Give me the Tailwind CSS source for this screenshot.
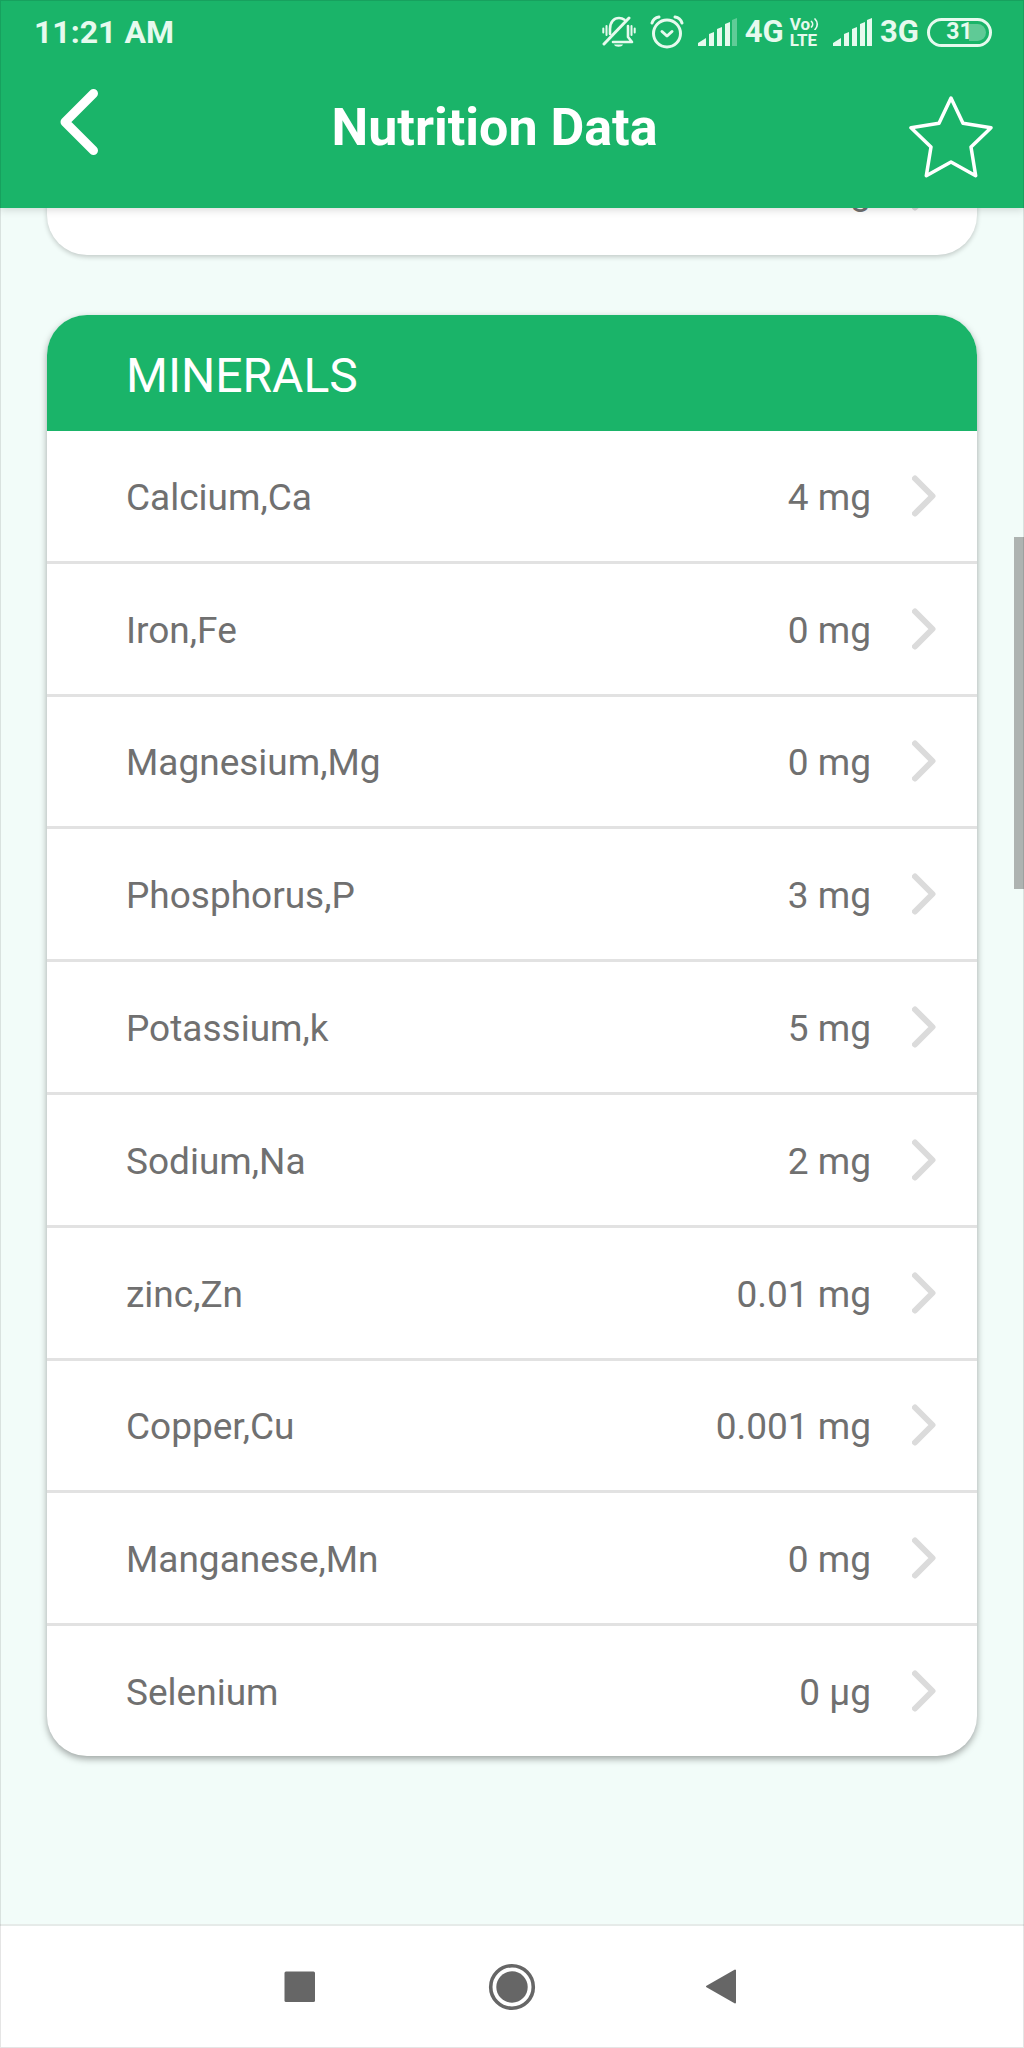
<!DOCTYPE html>
<html lang="en">
<head>
    <meta charset="UTF-8">
    <meta name="viewport" content="width=device-width, initial-scale=1.0">
    <title>Nutrition Data</title>
    <script src="https://cdn.jsdelivr.net/npm/@tailwindcss/browser@4"></script>
</head>
<body class="bg-[#f2fcf9] font-['Roboto',sans-serif]">
    <svg class="hidden">
        <symbol id="chevron" viewBox="0 0 24 42">
            <path d="M3 3.500 20.500 21 3 38.500" fill="none" stroke="#dbdbdb" stroke-width="6" stroke-linecap="round" stroke-linejoin="round"/>
        </symbol>
    </svg>

    <div class="relative flex min-h-screen flex-col overflow-hidden after:pointer-events-none after:absolute after:inset-0 after:z-20 after:border after:border-black/10">
        <header class="z-10 bg-[#1ab469] pb-6 text-white shadow-[0_2px_8px_rgba(0,0,0,0.15)]">
            <!-- status bar -->
            <div class="flex h-16 items-center justify-between pr-8 pl-8 text-[#e6faee]">
                <span class="pl-[2px] text-[32px] leading-8 font-bold">11:21 AM</span>
                <div class="flex items-center">
                    <!-- muted bell -->
                    <svg class="mr-[14px] h-[34px] w-[34px]" viewBox="0 0 34 34" fill="none" stroke="currentColor" stroke-width="2.6" stroke-linecap="round" stroke-linejoin="round">
                        <path d="M8 19V14C8 7 12 3 17 3c2 0 4 .6 5.500 1.800"/>
                        <path d="M26 11v11l4 5H11"/>
                        <path d="M2 29 27 3" stroke-width="3"/>
                        <path d="M4.500 11v9M1.300 13.500v4M29.500 11v9M32.700 13.500v4" stroke-width="2"/>
                        <path d="M12 29.500h9c-1 3-8 3-9 0z" fill="currentColor" stroke="none"/>
                    </svg>
                    <!-- alarm -->
                    <svg class="mr-[14px] h-[34px] w-[34px]" viewBox="0 0 34 34" fill="none" stroke="currentColor" stroke-width="3" stroke-linecap="round" stroke-linejoin="round">
                        <circle cx="17" cy="18.500" r="13.500"/>
                        <path d="M12 16.500 17 21l5-4.500"/>
                        <path d="M2 8C3 5 6 2.500 9 2M32 8c-1-3-4-5.500-7-6" stroke-width="3"/>
                    </svg>
                    <svg class="mr-2 h-7 w-[39px]" viewBox="0 0 39 28" fill="currentColor">
                        <path d="M0 28v-3l8-5v8zM11 16l5-2v14h-5zM19 11l5-2v19h-5zM27 6l5-2v24h-5z"/>
                        <path d="M34 2l5-2v28h-5z" opacity=".35"/>
                    </svg>
                    <span class="text-[31px] leading-8 font-bold">4G</span>
                    <span class="mr-[14px] ml-[6px] flex flex-col text-[17px] leading-4 font-bold">
                        <span class="flex items-center">Vo<svg class="h-3 w-[9px]" viewBox="0 0 9 12" fill="none" stroke="currentColor" stroke-width="1.700" stroke-linecap="round"><path d="M1.500 3.500c1.500 1.500 1.500 4 0 5.500M5 1c3 3 3 7.500 0 10.500"/></svg></span>
                        <span>LTE</span>
                    </span>
                    <svg class="mr-2 h-7 w-[39px]" viewBox="0 0 39 28" fill="currentColor">
                        <path d="M0 28v-3l8-5v8zM11 16l5-2v14h-5zM19 11l5-2v19h-5zM27 6l5-2v24h-5zM34 2l5-2v28h-5z"/>
                    </svg>
                    <span class="text-[31px] leading-8 font-bold">3G</span>
                    <span class="relative ml-2 flex h-[29px] w-[65px] items-center justify-center rounded-full border-3 border-current text-[23px] leading-6 font-bold">
                        <span class="absolute inset-y-[3px] right-[3px] w-[17px] rounded-r-full bg-white/30"></span>
                        <span class="relative">31</span>
                    </span>
                </div>
            </div>
            <!-- title bar -->
            <div class="flex h-[120px] items-start justify-between pr-[31px] pl-[60px]">
                <button type="button" aria-label="Back" class="mt-6">
                    <svg class="h-[68px] w-10" viewBox="0 0 40 68" fill="none" stroke="currentColor" stroke-width="9" stroke-linecap="round" stroke-linejoin="round">
                        <path d="M33.500 5.500 5 34l28.500 28.500"/>
                    </svg>
                </button>
                <h1 class="mt-[34px] mr-5 text-[52px] leading-[60px] font-bold">Nutrition Data</h1>
                <button type="button" aria-label="Add to favourites" class="mt-[31px]">
                    <svg class="h-[84px] w-[84px]" viewBox="0 0 84 84" fill="none" stroke="currentColor" stroke-width="3.500" stroke-linejoin="round">
                        <path d="M42 3 54 28.300 82 32.700 62 52 66.700 80.700 42 67 17.300 80.700 22 52 2 32.700 30 28.300z"/>
                    </svg>
                </button>
            </div>
        </header>

        <main class="flex-1 px-[47px]">
            <!-- tail of the previous group, scrolled under the header -->
            <section class="-mt-[83px] rounded-b-[40px] bg-white shadow-[0_2px_5px_rgba(0,0,0,0.2)]">
                <a href="#" class="flex h-[130px] items-center justify-end pr-[41px] text-[37px] leading-[44px] text-[#707070]">
                    <span class="mr-[41px] pt-1">0 mg</span>
                    <svg class="h-[42px] w-6"><use href="#chevron"/></svg>
                </a>
            </section>

            <section class="mt-[60px] overflow-hidden rounded-[40px] bg-white shadow-[0_3px_7px_rgba(0,0,0,0.35)]">
                <h2 class="bg-[#1ab469] px-[79px] pt-[33px] pb-[27px] text-[48px] leading-[56px] text-white">MINERALS</h2>
                <ul class="flex h-[1325px] flex-col divide-y-3 divide-[#e2e2e2] text-[37px] leading-[44px] text-[#707070]">
                    <li class="flex flex-1"><a href="#" class="flex flex-1 items-center pr-[41px] pl-[79px]">
                        <span class="flex-1 pt-1">Calcium,Ca</span><span class="mr-[41px] pt-1">4 mg</span>
                        <svg class="h-[42px] w-6"><use href="#chevron"/></svg>
                    </a></li>
                    <li class="flex flex-1"><a href="#" class="flex flex-1 items-center pr-[41px] pl-[79px]">
                        <span class="flex-1 pt-1">Iron,Fe</span><span class="mr-[41px] pt-1">0 mg</span>
                        <svg class="h-[42px] w-6"><use href="#chevron"/></svg>
                    </a></li>
                    <li class="flex flex-1"><a href="#" class="flex flex-1 items-center pr-[41px] pl-[79px]">
                        <span class="flex-1 pt-1">Magnesium,Mg</span><span class="mr-[41px] pt-1">0 mg</span>
                        <svg class="h-[42px] w-6"><use href="#chevron"/></svg>
                    </a></li>
                    <li class="flex flex-1"><a href="#" class="flex flex-1 items-center pr-[41px] pl-[79px]">
                        <span class="flex-1 pt-1">Phosphorus,P</span><span class="mr-[41px] pt-1">3 mg</span>
                        <svg class="h-[42px] w-6"><use href="#chevron"/></svg>
                    </a></li>
                    <li class="flex flex-1"><a href="#" class="flex flex-1 items-center pr-[41px] pl-[79px]">
                        <span class="flex-1 pt-1">Potassium,k</span><span class="mr-[41px] pt-1">5 mg</span>
                        <svg class="h-[42px] w-6"><use href="#chevron"/></svg>
                    </a></li>
                    <li class="flex flex-1"><a href="#" class="flex flex-1 items-center pr-[41px] pl-[79px]">
                        <span class="flex-1 pt-1">Sodium,Na</span><span class="mr-[41px] pt-1">2 mg</span>
                        <svg class="h-[42px] w-6"><use href="#chevron"/></svg>
                    </a></li>
                    <li class="flex flex-1"><a href="#" class="flex flex-1 items-center pr-[41px] pl-[79px]">
                        <span class="flex-1 pt-1">zinc,Zn</span><span class="mr-[41px] pt-1">0.01 mg</span>
                        <svg class="h-[42px] w-6"><use href="#chevron"/></svg>
                    </a></li>
                    <li class="flex flex-1"><a href="#" class="flex flex-1 items-center pr-[41px] pl-[79px]">
                        <span class="flex-1 pt-1">Copper,Cu</span><span class="mr-[41px] pt-1">0.001 mg</span>
                        <svg class="h-[42px] w-6"><use href="#chevron"/></svg>
                    </a></li>
                    <li class="flex flex-1"><a href="#" class="flex flex-1 items-center pr-[41px] pl-[79px]">
                        <span class="flex-1 pt-1">Manganese,Mn</span><span class="mr-[41px] pt-1">0 mg</span>
                        <svg class="h-[42px] w-6"><use href="#chevron"/></svg>
                    </a></li>
                    <li class="flex flex-1"><a href="#" class="flex flex-1 items-center pr-[41px] pl-[79px]">
                        <span class="flex-1 pt-1">Selenium</span><span class="mr-[41px] pt-1">0 µg</span>
                        <svg class="h-[42px] w-6"><use href="#chevron"/></svg>
                    </a></li>
                </ul>
            </section>
        </main>

        <!-- scroll thumb -->
        <div class="absolute top-[537px] right-0 h-[352px] w-[10px] bg-[#aeb3b1]"></div>

        <nav class="flex h-[124px] items-center justify-center gap-[172px] border-t-2 border-[#e6ebe9] bg-white text-[#666]">
            <button type="button" aria-label="Recent apps">
                <svg class="h-8 w-8" viewBox="0 0 32 32" fill="currentColor"><rect x="0.500" y="0.500" width="30.500" height="30.500" rx="1.500"/></svg>
            </button>
            <button type="button" aria-label="Home">
                <svg class="h-12 w-12" viewBox="0 0 48 48" fill="currentColor">
                    <circle cx="24" cy="24" r="21.300" fill="none" stroke="currentColor" stroke-width="3.600"/>
                    <circle cx="24" cy="24" r="15.700"/>
                </svg>
            </button>
            <button type="button" aria-label="Back">
                <svg class="h-9 w-8 overflow-visible" viewBox="0 0 32 36" fill="currentColor" stroke="currentColor" stroke-width="2" stroke-linejoin="round"><path d="M-1 17.500 27 1.500v32z"/></svg>
            </button>
        </nav>
    </div>
</body>
</html>
